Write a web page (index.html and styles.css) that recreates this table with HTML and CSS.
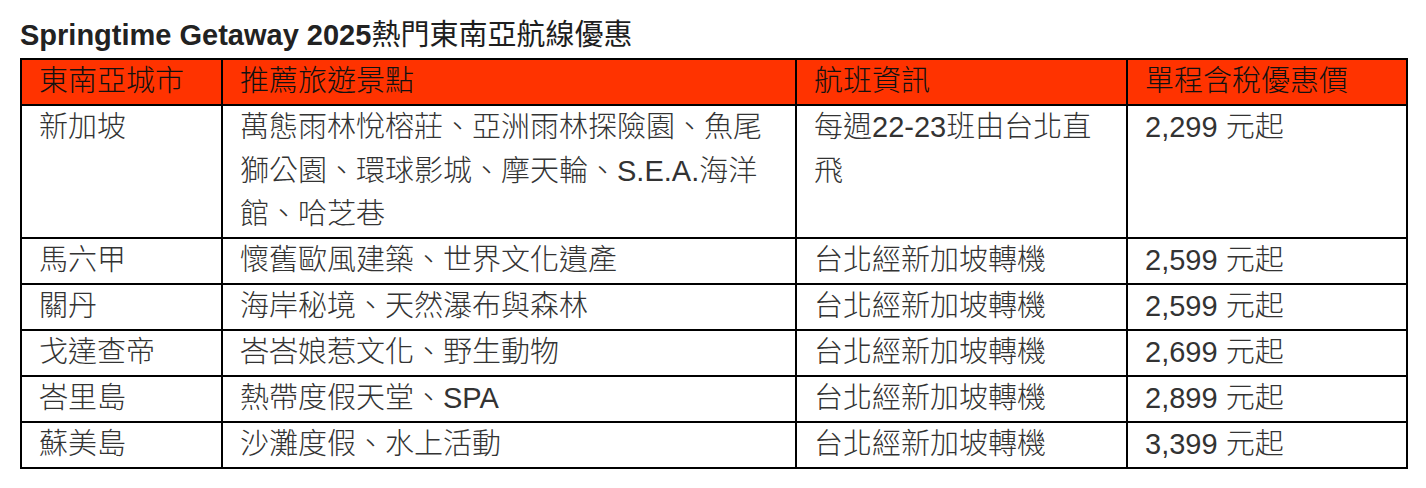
FILE: index.html
```html
<!DOCTYPE html>
<html lang="zh-Hant">
<head>
<meta charset="utf-8">
<title>Springtime Getaway 2025</title>
<link rel="stylesheet" href="styles.css">
</head>
<body>
<div class="page">
  <h2 class="title">Springtime Getaway 2025<span class="title-cjk">熱門東南亞航線優惠</span></h2>
  <table class="routes">
    <colgroup>
      <col class="c-city">
      <col class="c-spots">
      <col class="c-flight">
      <col class="c-price">
    </colgroup>
    <thead>
      <tr>
        <th>東南亞城市</th>
        <th>推薦旅遊景點</th>
        <th>航班資訊</th>
        <th>單程含稅優惠價</th>
      </tr>
    </thead>
    <tbody>
      <tr>
        <td>新加坡</td>
        <td>萬態雨林悅榕莊、亞洲雨林探險園、魚尾獅公園、環球影城、摩天輪、S.E.A.海洋館、哈芝巷</td>
        <td>每週22-23班由台北直飛</td>
        <td>2,299 元起</td>
      </tr>
      <tr>
        <td>馬六甲</td>
        <td>懷舊歐風建築、世界文化遺產</td>
        <td>台北經新加坡轉機</td>
        <td>2,599 元起</td>
      </tr>
      <tr>
        <td>關丹</td>
        <td>海岸秘境、天然瀑布與森林</td>
        <td>台北經新加坡轉機</td>
        <td>2,599 元起</td>
      </tr>
      <tr>
        <td>戈達查帝</td>
        <td>峇峇娘惹文化、野生動物</td>
        <td>台北經新加坡轉機</td>
        <td>2,699 元起</td>
      </tr>
      <tr>
        <td>峇里島</td>
        <td>熱帶度假天堂、SPA</td>
        <td>台北經新加坡轉機</td>
        <td>2,899 元起</td>
      </tr>
      <tr>
        <td>蘇美島</td>
        <td>沙灘度假、水上活動</td>
        <td>台北經新加坡轉機</td>
        <td>3,399 元起</td>
      </tr>
    </tbody>
  </table>
</div>
</body>
</html>
```
FILE: styles.css
```css
html, body {
  margin: 0;
  padding: 0;
  background: #ffffff;
}

.page {
  padding: 18px 20px 0 20px;
  font-family: "Liberation Sans", "Noto Sans CJK TC", sans-serif;
}

.title {
  margin: 0 0 6px 0;
  font-size: 29px;
  line-height: 34px;
  font-weight: bold;
  color: #222222;
}

.title-cjk {
  font-weight: 400;
  color: #1e1e1e;
}

.routes {
  width: 100%;
  border-collapse: collapse;
  table-layout: fixed;
  font-size: 29px;
  line-height: 43.5px;
  color: #333333;
  font-weight: 300;
}

.c-city { width: 201px; }
.c-spots { width: 574px; }
.c-flight { width: 331px; }
.c-price { width: 280px; }

.routes th,
.routes td {
  border: 2px solid #000000;
  padding: 0 17px 0.5px 17px;
  text-align: left;
  vertical-align: top;
  font-weight: 300;
}

.routes th {
  background: #ff3300;
  color: #111111;
}
```
